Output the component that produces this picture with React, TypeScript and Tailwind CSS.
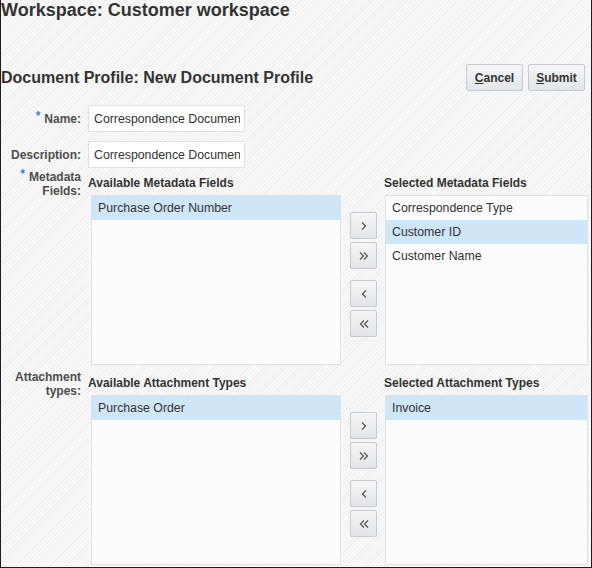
import React from 'react'

const Chevron = ({ dir, double }: { dir: 'left' | 'right'; double?: boolean }) => {
  const single = dir === 'right' ? 'M2 1.5 L5.5 5 L2 8.5' : 'M6 1.5 L2.5 5 L6 8.5'
  const second = dir === 'right' ? 'M6 1.5 L9.5 5 L6 8.5' : 'M10 1.5 L6.5 5 L10 8.5'
  return (
    <svg width={double ? 12 : 8} height="10" viewBox={double ? '0 0 12 10' : '0 0 8 10'} fill="none">
      <path d={single} stroke="#555" strokeWidth="1.2" />
      {double && <path d={second} stroke="#555" strokeWidth="1.2" />}
    </svg>
  )
}

const ShuttleButton = ({ dir, double }: { dir: 'left' | 'right'; double?: boolean }) => (
  <button className="flex h-[27px] w-[27px] items-center justify-center rounded-[2px] border border-[#c3cbd3] bg-gradient-to-b from-[#f3f5f7] to-[#e2e6ea]">
    <Chevron dir={dir} double={double} />
  </button>
)

const ActionButton = ({ first, rest }: { first: string; rest: string }) => (
  <button className="h-[27px] w-[57px] rounded-[2px] border border-[#c3cbd3] bg-gradient-to-b from-[#f3f5f7] to-[#e2e6ea] text-[12px] font-bold text-[#333]">
    <span className="underline">{first}</span>
    {rest}
  </button>
)

const ListBox = ({ items, selected, className }: { items: string[]; selected?: number; className?: string }) => (
  <div className={`h-[170px] border border-[#dde2e7] bg-[#fbfcfe] ${className ?? ''}`}>
    {items.map((item, i) => (
      <div
        key={item}
        className={`flex h-[24px] items-center pl-[6px] text-[12.3px] text-[#333] ${i === selected ? 'bg-[#cfe5f8]' : ''}`}
      >
        {item}
      </div>
    ))}
  </div>
)

const FieldLabel = ({ lines, required }: { lines: string[]; required?: boolean }) => (
  <div className="pr-[7px] text-right text-[12px] font-bold leading-[14px] text-[#4d4d4d]">
    {lines.map((line, i) => (
      <div key={line}>
        {required && i === 0 && <span className="relative -top-[3px] mr-[4px] text-[#3f7fd0]">*</span>}
        {line}
      </div>
    ))}
  </div>
)

const Shuttle = ({
  availableTitle,
  selectedTitle,
  available,
  availableSelected,
  chosen,
  chosenSelected,
}: {
  availableTitle: string
  selectedTitle: string
  available: string[]
  availableSelected?: number
  chosen: string[]
  chosenSelected?: number
}) => (
  <div className="grid grid-cols-[253px_43px_207px] pt-[8px]">
    <div className="h-[19px] text-[12px] font-bold leading-[14px] text-[#333]">{availableTitle}</div>
    <div />
    <div className="h-[19px] text-[12px] font-bold leading-[14px] text-[#333]">{selectedTitle}</div>
    <ListBox items={available} selected={availableSelected} className="ml-[3px]" />
    <div className="flex flex-col items-center pt-[17px] pl-[2px]">
      <div className="flex flex-col gap-[3px]">
        <ShuttleButton dir="right" />
        <ShuttleButton dir="right" double />
      </div>
      <div className="mt-[11px] flex flex-col gap-[3px]">
        <ShuttleButton dir="left" />
        <ShuttleButton dir="left" double />
      </div>
    </div>
    <ListBox items={chosen} selected={chosenSelected} className="ml-[1px] w-[203px]" />
  </div>
)

export default function App() {
  return (
    <div
      className="h-[568px] w-[592px] overflow-hidden border-x border-b border-[#1e1e1e] bg-[repeating-linear-gradient(135deg,#f8f8f8_0px,#f8f8f8_2px,#f0f0f0_2px,#f0f0f0_3px)] text-[#333]"
      style={{ fontFamily: '"Liberation Sans", Arial, sans-serif' }}
    >
      <h1 className="pt-[1px] text-[18px] font-bold leading-[18px] text-[#333]">Workspace: Customer workspace</h1>

      <div className="mt-[45px] flex h-[27px] items-center justify-between pr-[6px]">
        <h2 className="text-[16px] font-bold leading-[18px] text-[#333]">Document Profile: New Document Profile</h2>
        <div className="flex gap-[5px]">
          <ActionButton first="C" rest="ancel" />
          <ActionButton first="S" rest="ubmit" />
        </div>
      </div>

      <div className="mt-[14px] grid grid-cols-[87px_1fr]">
        <div className="flex h-[27px] items-center justify-end">
          <FieldLabel lines={['Name:']} required />
        </div>
        <div>
          <input
            readOnly
            value="Correspondence Document"
            className="h-[27px] w-[157px] border border-[#dde2e7] bg-white pl-[5px] pr-[4px] text-[12.3px] text-[#333] outline-none"
          />
        </div>

        <div className="mt-[9px] flex h-[27px] items-center justify-end">
          <FieldLabel lines={['Description:']} />
        </div>
        <div className="mt-[9px]">
          <input
            readOnly
            value="Correspondence Document"
            className="h-[27px] w-[157px] border border-[#dde2e7] bg-white pl-[5px] pr-[4px] text-[12.3px] text-[#333] outline-none"
          />
        </div>

        <div className="pt-[2px]">
          <FieldLabel lines={['Metadata', 'Fields:']} required />
        </div>
        <Shuttle
          availableTitle="Available Metadata Fields"
          selectedTitle="Selected Metadata Fields"
          available={['Purchase Order Number']}
          availableSelected={0}
          chosen={['Correspondence Type', 'Customer ID', 'Customer Name']}
          chosenSelected={1}
        />

        <div className="pt-[5px]">
          <FieldLabel lines={['Attachment', 'types:']} />
        </div>
        <div className="pt-[3px]">
          <Shuttle
            availableTitle="Available Attachment Types"
            selectedTitle="Selected Attachment Types"
            available={['Purchase Order']}
            availableSelected={0}
            chosen={['Invoice']}
            chosenSelected={0}
          />
        </div>
      </div>
    </div>
  )
}
